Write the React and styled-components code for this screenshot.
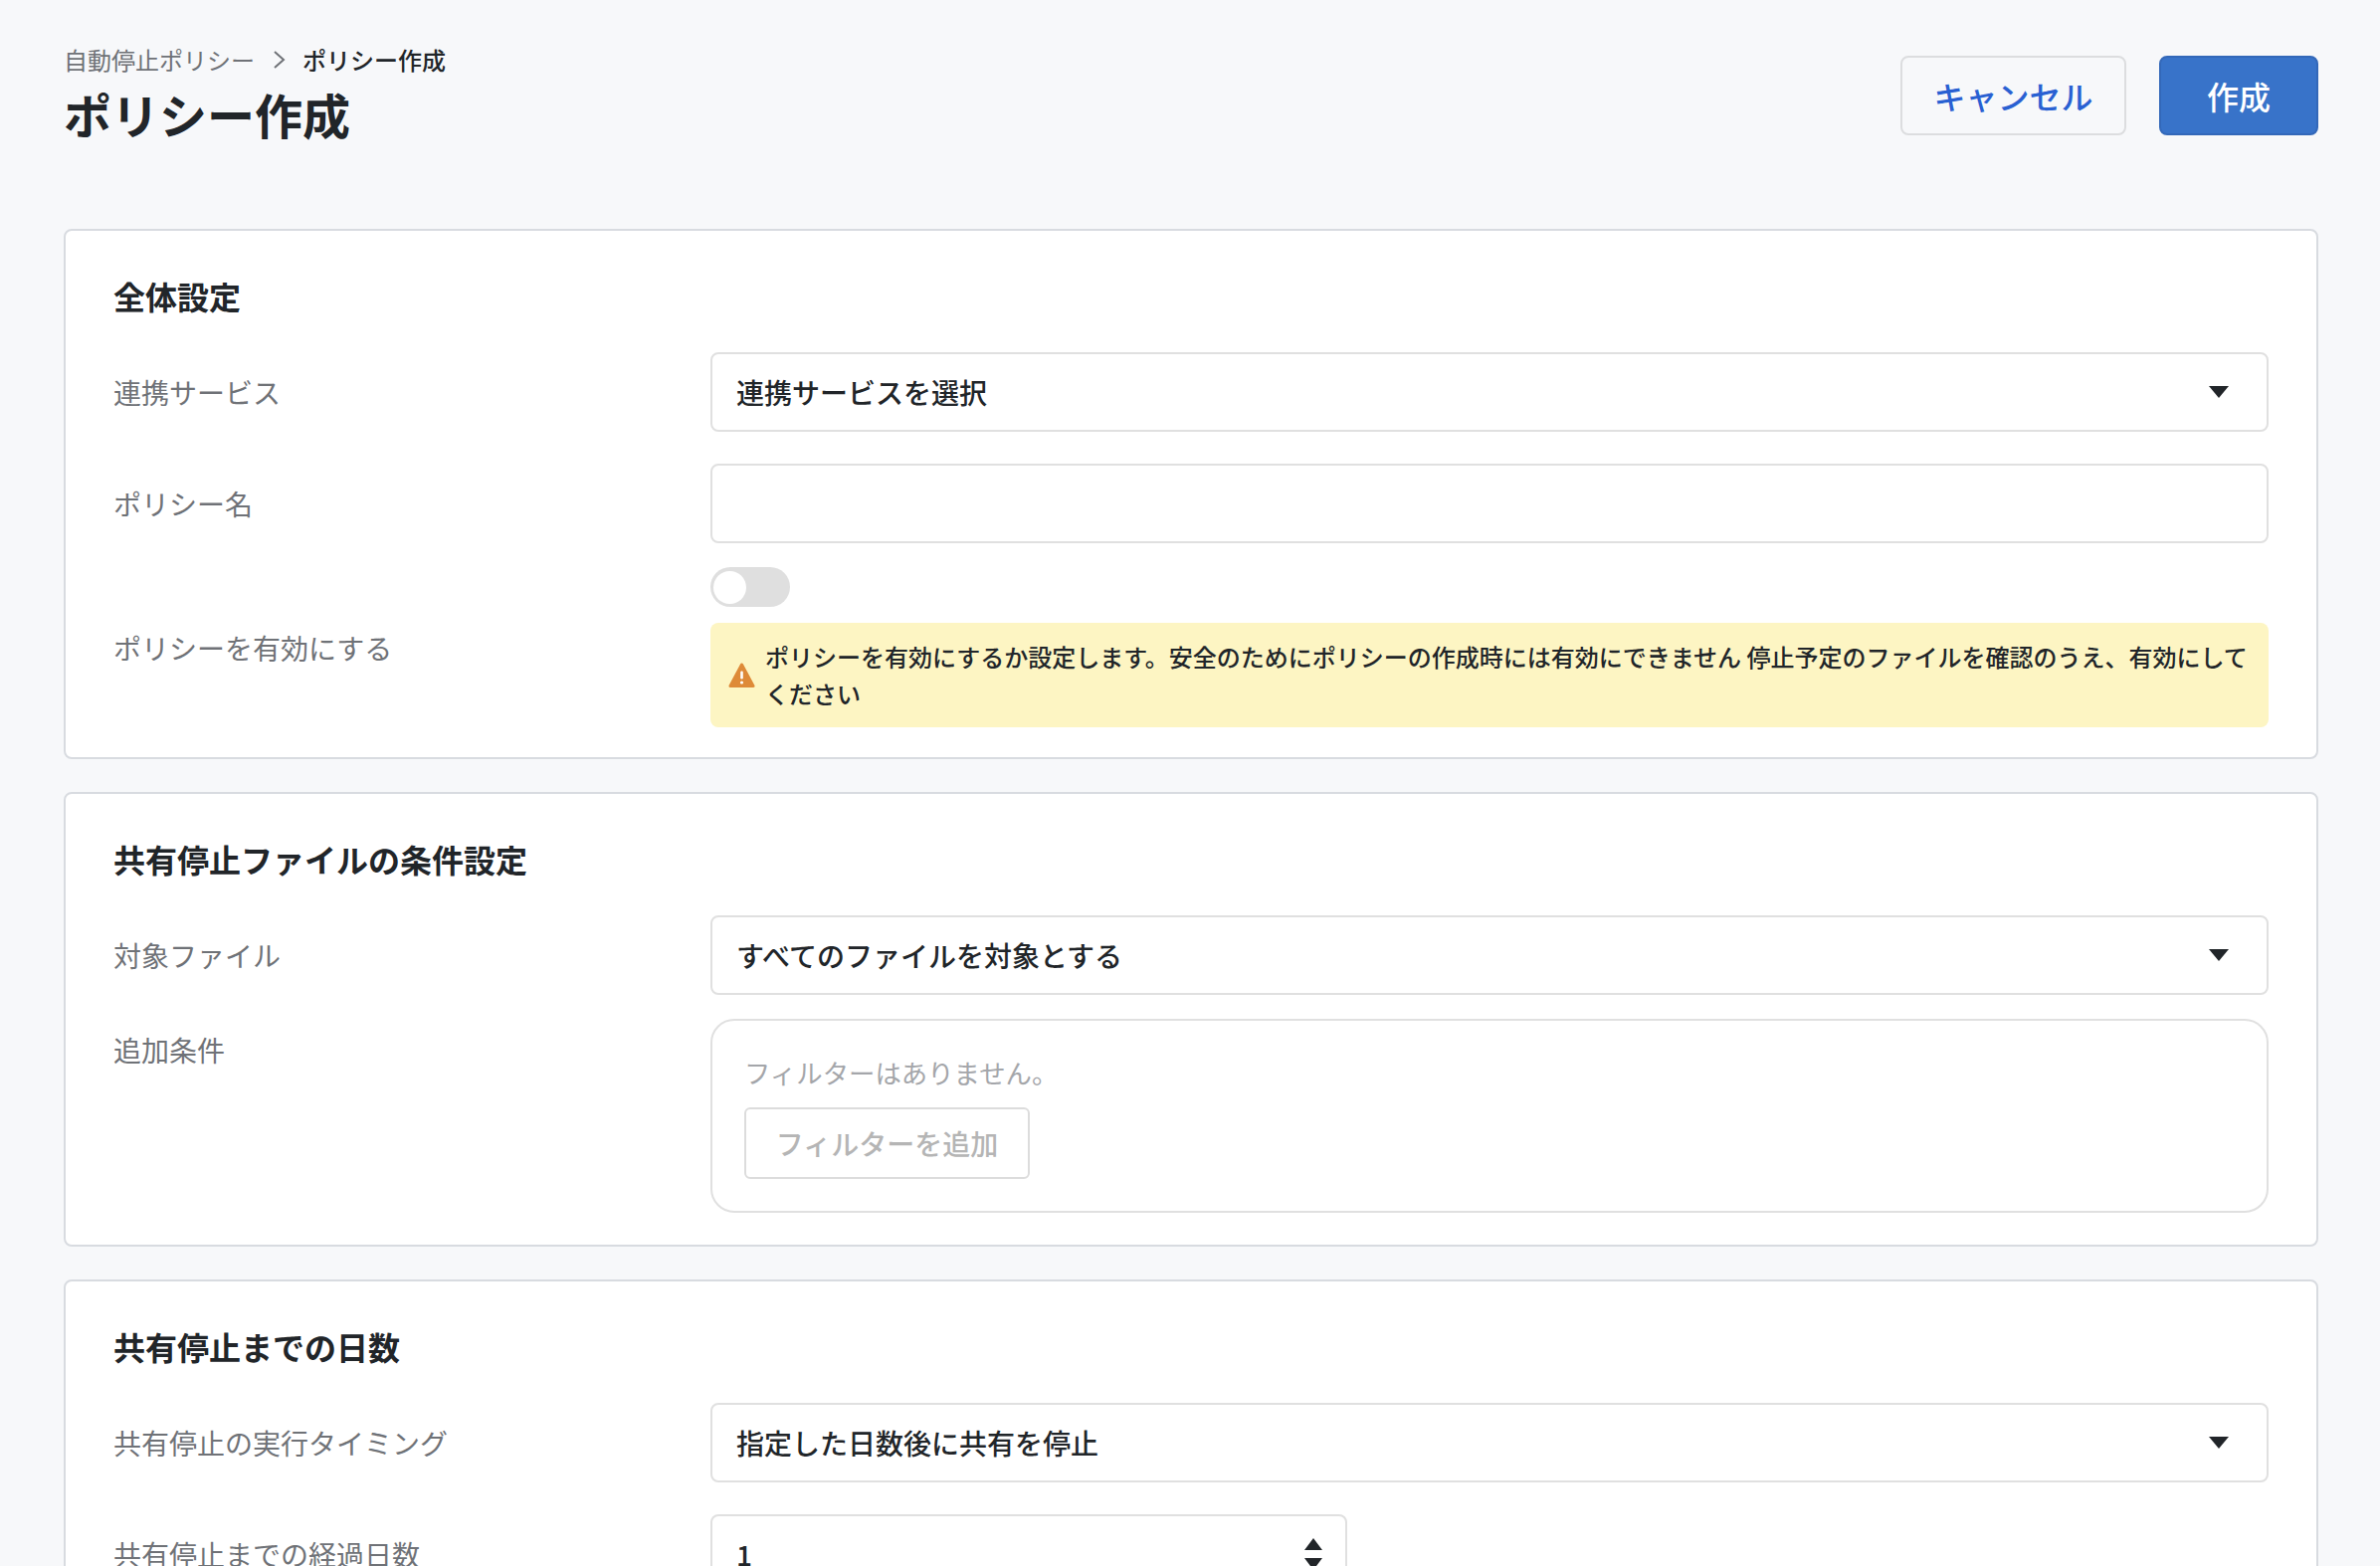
import React from "react";
import styled, { createGlobalStyle } from "styled-components";

const Global = createGlobalStyle`
  html, body { margin: 0; padding: 0; height: 100%; overflow: hidden; background: #f7f8fa; }
  body { font-family: "Noto Sans CJK JP", "Noto Sans", sans-serif; color: #212529; }
  * { box-sizing: border-box; }
`;

const Page = styled.div`
  height: 1574px;
  overflow: hidden;
  padding: 0 62px 0 64px;
`;

const Header = styled.header`
  display: flex;
  justify-content: space-between;
  align-items: flex-start;
  height: 230px;
  padding-top: 42px;
`;

const HeaderText = styled.div`
  display: flex;
  flex-direction: column;
`;

const Breadcrumb = styled.nav`
  display: flex;
  align-items: center;
  height: 36px;
  font-size: 24px;
  line-height: 36px;
`;

const CrumbLink = styled.span`
  color: #6f7277;
`;

const CrumbCurrent = styled.span`
  color: #212529;
  font-weight: 500;
`;

const CrumbSep = styled.svg`
  width: 14px;
  height: 18px;
  margin: 0 16px 0 18px;
  fill: none;
  stroke: #6f7277;
  stroke-width: 2;
`;

const Title = styled.h1`
  margin: 0;
  font-size: 48px;
  line-height: 72px;
  font-weight: 700;
  color: #212529;
`;

const Actions = styled.div`
  display: flex;
  gap: 33px;
  padding-top: 14px;
`;

const Button = styled.button`
  height: 80px;
  width: ${(p) => p.$w}px;
  padding: 0;
  border-radius: 8px;
  border: 2px solid ${(p) => (p.$primary ? "#3368b9" : "#dcdddf")};
  background: ${(p) => (p.$primary ? "#3873c9" : "transparent")};
  color: ${(p) => (p.$primary ? "#ffffff" : "#2960d2")};
  font: 500 32px "Noto Sans CJK JP", sans-serif;
`;

const Card = styled.section`
  background: #fff;
  border: 2px solid #d8dbe0;
  border-radius: 8px;
  padding: 42px 48px ${(p) => p.$pb ?? 30}px;
  margin-bottom: 33px;
`;

const CardTitle = styled.h2`
  margin: 0 0 34px;
  font-size: 32px;
  line-height: 46px;
  font-weight: 700;
  color: #212529;
`;

const Row = styled.div`
  display: grid;
  grid-template-columns: 600px 1fr;
  align-items: ${(p) => p.$align || "center"};
  margin-bottom: ${(p) => p.$mb ?? 32}px;
  &:last-child { margin-bottom: 0; }
`;

const Label = styled.div`
  font-size: 28px;
  line-height: 40px;
  font-weight: 400;
  color: #6f7277;
  padding-top: ${(p) => p.$pt ?? 0}px;
`;

const SelectBox = styled.div`
  display: flex;
  align-items: center;
  justify-content: space-between;
  height: 80px;
  padding: 0 38px 0 24px;
  background: #fff;
  border: 2px solid #e0e0e0;
  border-radius: 8px;
  font-size: 28px;
  font-weight: 500;
  color: #212529;
`;

const Caret = styled.svg`
  width: 20px;
  height: 12px;
  fill: #212529;
  flex: none;
`;

const TextInput = styled.input`
  display: block;
  width: 100%;
  height: 80px;
  border: 2px solid #e0e0e0;
  border-radius: 8px;
  background: #fff;
  padding: 0 24px;
  outline: none;
  font: 500 28px "Noto Sans CJK JP", sans-serif;
`;

const ToggleStack = styled.div`
  display: flex;
  flex-direction: column;
  gap: 16px;
  align-items: flex-start;
`;

const Toggle = styled.div`
  display: flex;
  align-items: center;
  width: 80px;
  height: 40px;
  padding: 0 3px;
  border-radius: 20px;
  background: #dfdfdf;
`;

const Knob = styled.span`
  width: 33px;
  height: 33px;
  border-radius: 50%;
  background: #fff;
`;

const Warning = styled.div`
  display: flex;
  align-items: center;
  gap: 10px;
  width: 100%;
  padding: 16px 18px;
  border-radius: 8px;
  background: #fdf5c3;
  font-size: 24px;
  line-height: 36.6px;
  font-weight: 500;
  color: #212529;
`;

const WarnIcon = styled.svg`
  width: 27px;
  height: 27px;
  flex: none;
`;

const FilterBox = styled.div`
  display: flex;
  flex-direction: column;
  align-items: flex-start;
  height: 195px;
  padding: 33px 32px 0;
  border: 2px solid #e0e0e0;
  border-radius: 24px;
  background: #fff;
`;

const FilterNote = styled.div`
  font-size: 26.4px;
  line-height: 38px;
  color: #a4a6aa;
  margin-bottom: 16px;
`;

const FilterButton = styled.button`
  width: 287px;
  height: 72px;
  padding: 0;
  border: 2px solid #dcdcdc;
  border-radius: 6px;
  background: #fff;
  color: #b5b5b5;
  font: 500 28px "Noto Sans CJK JP", sans-serif;
`;

const NumberBox = styled.div`
  display: flex;
  align-items: center;
  justify-content: space-between;
  width: 640px;
  height: 80px;
  padding: 0 22px 0 24px;
  border: 2px solid #e0e0e0;
  border-radius: 8px;
  background: #fff;
  font-size: 28px;
  font-weight: 500;
`;

const Spinner = styled.svg`
  width: 20px;
  height: 32px;
  fill: #212529;
  flex: none;
`;

const CaretIcon = () => (
  <Caret viewBox="0 0 20 12"><path d="M0 0h20L10 12z" /></Caret>
);

const Select = ({ children }) => (
  <SelectBox>
    <span>{children}</span>
    <CaretIcon />
  </SelectBox>
);

export default function App() {
  return (
    <Page>
      <Global />
      <Header>
        <HeaderText>
          <Breadcrumb>
            <CrumbLink>自動停止ポリシー</CrumbLink>
            <CrumbSep viewBox="0 0 14 18"><path d="M2 1l9 8-9 8" /></CrumbSep>
            <CrumbCurrent>ポリシー作成</CrumbCurrent>
          </Breadcrumb>
          <Title>ポリシー作成</Title>
        </HeaderText>
        <Actions>
          <Button $w={227}>キャンセル</Button>
          <Button $w={160} $primary>作成</Button>
        </Actions>
      </Header>

      <Card>
        <CardTitle>全体設定</CardTitle>
        <Row>
          <Label>連携サービス</Label>
          <Select>連携サービスを選択</Select>
        </Row>
        <Row $mb={24}>
          <Label>ポリシー名</Label>
          <TextInput />
        </Row>
        <Row>
          <Label>ポリシーを有効にする</Label>
          <ToggleStack>
            <Toggle><Knob /></Toggle>
            <Warning>
              <WarnIcon viewBox="0 0 27 27">
                <path d="M13.5 3 25 24.5H2z" fill="#de8a38" stroke="#de8a38" strokeWidth="3" strokeLinejoin="round" />
                <rect x="12.2" y="9.5" width="2.6" height="8" rx="1.2" fill="#fff" />
                <circle cx="13.5" cy="21" r="1.6" fill="#fff" />
              </WarnIcon>
              <span>ポリシーを有効にするか設定します。安全のためにポリシーの作成時には有効にできません 停止予定のファイルを確認のうえ、有効にしてください</span>
            </Warning>
          </ToggleStack>
        </Row>
      </Card>

      <Card $pb={32}>
        <CardTitle>共有停止ファイルの条件設定</CardTitle>
        <Row $mb={24}>
          <Label>対象ファイル</Label>
          <Select>すべてのファイルを対象とする</Select>
        </Row>
        <Row $align="start">
          <Label $pt={11}>追加条件</Label>
          <FilterBox>
            <FilterNote>フィルターはありません。</FilterNote>
            <FilterButton>フィルターを追加</FilterButton>
          </FilterBox>
        </Row>
      </Card>

      <Card>
        <CardTitle>共有停止までの日数</CardTitle>
        <Row>
          <Label>共有停止の実行タイミング</Label>
          <Select>指定した日数後に共有を停止</Select>
        </Row>
        <Row>
          <Label>共有停止までの経過日数</Label>
          <NumberBox>
            <span>1</span>
            <Spinner viewBox="0 0 20 32">
              <path d="M10 0l9 12H1zM10 32l-9-12h18z" />
            </Spinner>
          </NumberBox>
        </Row>
      </Card>
    </Page>
  );
}
